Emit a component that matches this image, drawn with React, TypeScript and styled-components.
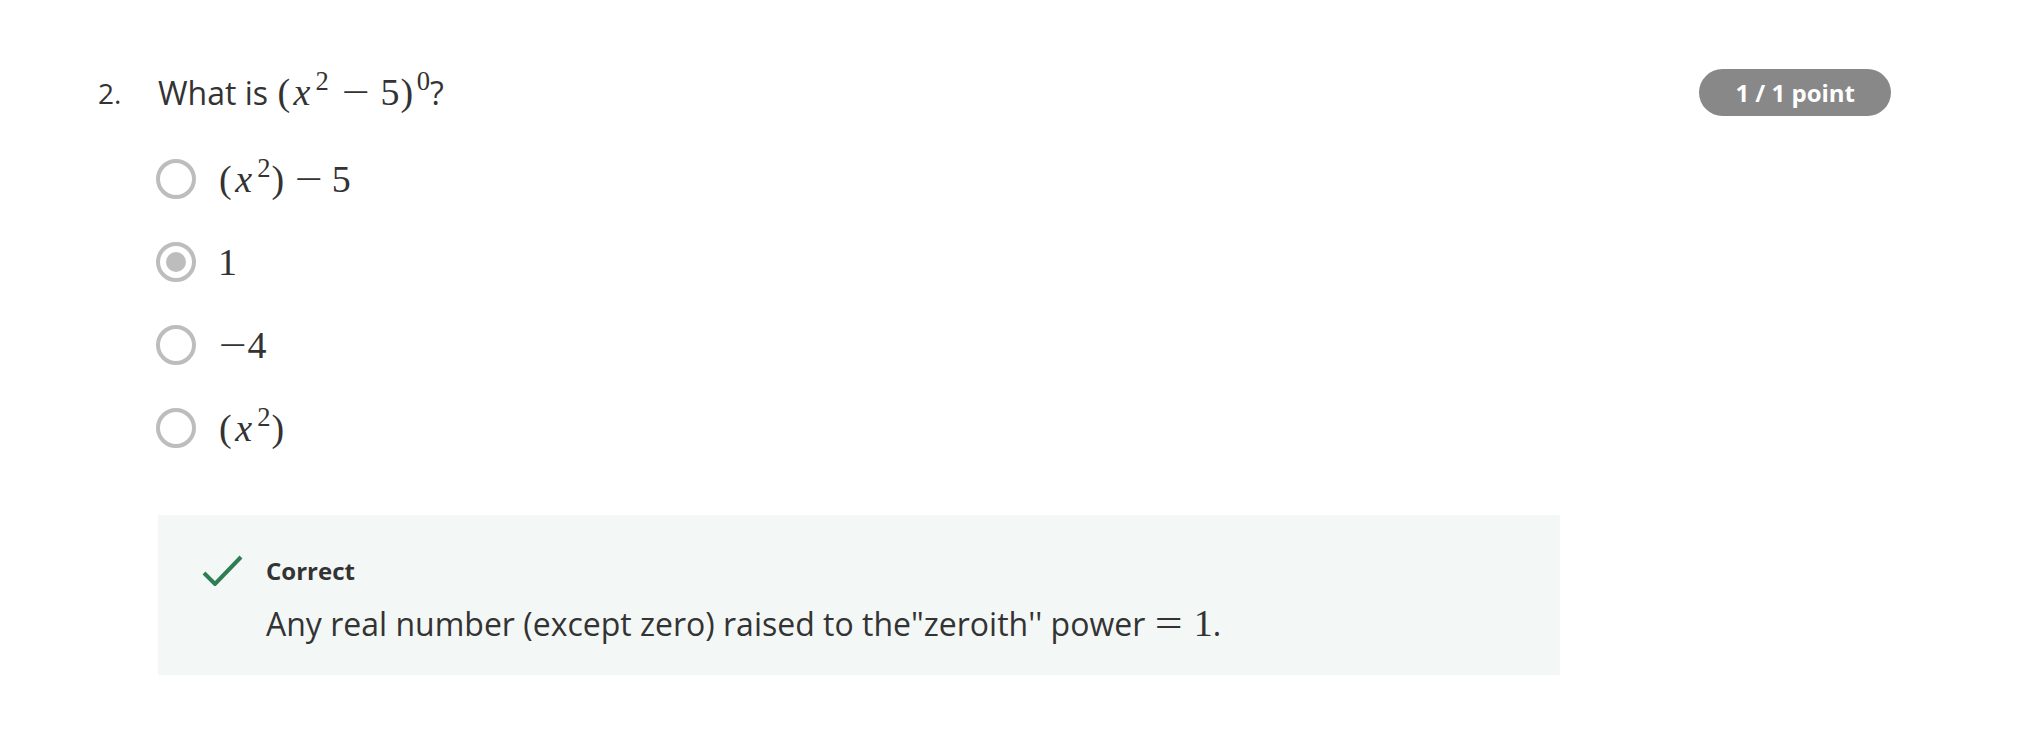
import React from "react";
import styled, { createGlobalStyle } from "styled-components";

const Global = createGlobalStyle`
  html, body { margin: 0; padding: 0; background: #ffffff; }
  body { font-family: "Open Sans", "Noto Sans", sans-serif; color: #333333; }
  * { box-sizing: border-box; }
`;

const Page = styled.div`
  width: 2022px;
  height: 746px;
  padding: 69px 131px 0 98px;
`;

const QuestionRow = styled.div`
  display: flex;
  align-items: flex-start;
`;

const Number = styled.div`
  width: 60px;
  flex: none;
  font-size: 28px;
  line-height: 48px;
  color: #333333;
`;

const Body = styled.div`
  flex: 1;
  display: flex;
  flex-direction: column;
  margin-right: 139px;
`;

const Prompt = styled.div`
  height: 48px;
  font-size: 32px;
  line-height: 48px;
  display: flex;
  align-items: baseline;
  white-space: pre;
`;

const Math = styled.span`
  font-family: "Liberation Serif", "DejaVu Serif", serif;
  font-size: 38px;
  line-height: 44px;
  white-space: nowrap;
`;

/* glyph box with Computer-Modern-like advance widths */
const G = styled.span<{ w: number; italic?: boolean }>`
  display: inline-block;
  width: ${(p) => p.w}em;
  text-align: center;
  font-style: ${(p) => (p.italic ? "italic" : "normal")};
`;

const Sup = styled.sup`
  font-size: 0.7em;
  vertical-align: 0.55em;
  line-height: 0;
  display: inline-block;
  width: 0.5em;
  margin-left: 0.1em;
  text-align: center;
`;

const Op = styled.span<{ l: number; r: number }>`
  display: inline-block;
  width: 0.778em;
  text-align: center;
  margin: 0 ${(p) => p.r}em 0 ${(p) => p.l}em;
  transform: scaleX(1.3);
`;

const Num = styled.span<{ lead?: number }>`
  margin-left: ${(p) => p.lead ?? 0}em;
`;

const Options = styled.div`
  display: flex;
  flex-direction: column;
  margin-top: 20px;
`;

const Option = styled.label`
  display: flex;
  align-items: center;
  height: 83px;
  gap: 22px;
  margin-left: -2px;
`;

const Radio = styled.span<{ checked?: boolean }>`
  width: 40px;
  height: 40px;
  flex: none;
  border-radius: 50%;
  border: 4px solid #bdbdbd;
  display: flex;
  align-items: center;
  justify-content: center;
  &::after {
    content: "";
    width: 20px;
    height: 20px;
    border-radius: 50%;
    background: #bdbdbd;
    display: ${(p) => (p.checked ? "block" : "none")};
  }
`;

const Feedback = styled.div`
  margin-top: 46px;
  background: #f3f8f6;
  height: 160px;
  padding: 40px 0 0 44px;
  display: flex;
  gap: 23px;
  align-items: flex-start;
`;

const CheckIcon = styled.svg`
  flex: none;
`;

const FeedbackText = styled.div`
  display: flex;
  flex-direction: column;
`;

const FeedbackTitle = styled.div`
  font-weight: 700;
  font-size: 24px;
  line-height: 32px;
  color: #333333;
`;

const Explanation = styled.div`
  margin-top: 13px;
  font-size: 32px;
  line-height: 48px;
  white-space: pre;
`;

const Badge = styled.div`
  flex: none;
  height: 47px;
  padding: 0 36px;
  border-radius: 24px;
  background: #888888;
  color: #ffffff;
  font-weight: 700;
  font-size: 24px;
  line-height: 47px;
  white-space: nowrap;
`;

const LP = () => <G w={0.389}>(</G>;
const RP = () => <G w={0.389}>)</G>;
const X = () => (
  <G w={0.572} italic>
    x
  </G>
);

export default function App() {
  return (
    <>
      <Global />
      <Page>
        <QuestionRow>
          <Number>2.</Number>
          <Body>
            <Prompt>
              What is{" "}
              <Math>
                <LP />
                <X />
                <Sup>2</Sup>
                <Op l={0.32} r={0.26}>
                  −
                </Op>
                5<RP />
                <Sup>0</Sup>
              </Math>
              ?
            </Prompt>
            <Options>
              <Option>
                <Radio />
                <Math>
                  <LP />
                  <X />
                  <Sup>2</Sup>
                  <RP />
                  <Op l={0.222} r={0.222}>
                    −
                  </Op>
                  5
                </Math>
              </Option>
              <Option>
                <Radio checked />
                <Math>1</Math>
              </Option>
              <Option>
                <Radio />
                <Math>
                  <Op l={0} r={0}>
                    −
                  </Op>
                  4
                </Math>
              </Option>
              <Option>
                <Radio />
                <Math>
                  <LP />
                  <X />
                  <Sup>2</Sup>
                  <RP />
                </Math>
              </Option>
            </Options>
            <Feedback>
              <CheckIcon width="41" height="31" viewBox="0 0 41 31">
                <path d="M2 18 L13 29 L39 2" fill="none" stroke="#2f7d52" strokeWidth="4" />
              </CheckIcon>
              <FeedbackText>
                <FeedbackTitle>Correct</FeedbackTitle>
                <Explanation>
                  Any real number (except zero) raised to the"zeroith'' power{" "}
                  <Math>
                    <Op l={0} r={0}>
                      =
                    </Op>
                    <Num lead={0.278}>1</Num>
                  </Math>
                  .
                </Explanation>
              </FeedbackText>
            </Feedback>
          </Body>
          <Badge>1 / 1 point</Badge>
        </QuestionRow>
      </Page>
    </>
  );
}
